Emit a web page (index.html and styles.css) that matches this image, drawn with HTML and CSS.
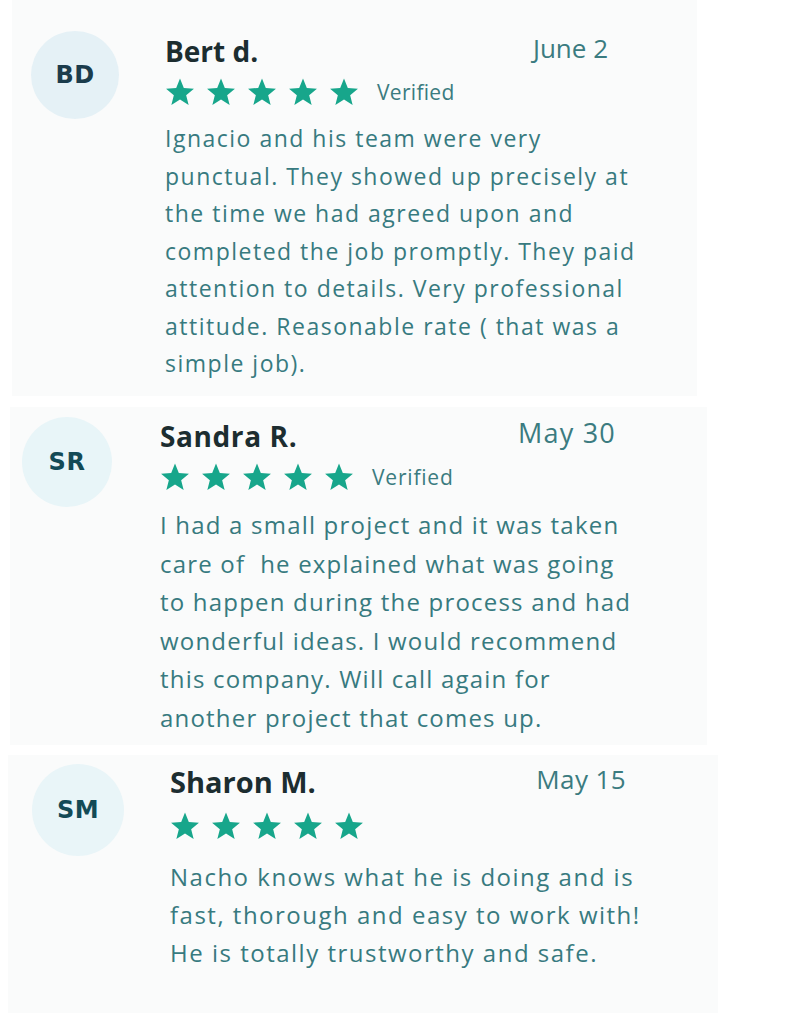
FILE: index.html
```html
<!DOCTYPE html>
<html lang="en">
<head>
<meta charset="utf-8">
<title>Reviews</title>
<link rel="stylesheet" href="styles.css">
</head>
<body>
<svg width="0" height="0" class="defs">
  <defs>
    <symbol id="star" viewBox="0 0 24 24">
      <path d="M12 1.2l3.05 7.55 8.1.55-6.22 5.2 1.98 7.9L12 18.05 5.09 22.4l1.98-7.9L.85 9.3l8.1-.55z"/>
    </symbol>
  </defs>
</svg>
<main class="reviews">
  <section class="card card-1">
    <div class="avatar">BD</div>
    <div class="content">
      <div class="head">
        <span class="name">Bert d.</span>
        <span class="date">June 2</span>
      </div>
      <div class="rating">
        <svg class="star"><use href="#star"/></svg>
        <svg class="star"><use href="#star"/></svg>
        <svg class="star"><use href="#star"/></svg>
        <svg class="star"><use href="#star"/></svg>
        <svg class="star"><use href="#star"/></svg>
        <span class="verified">Verified</span>
      </div>
      <p class="text">Ignacio and his team were very<br>punctual. They showed up precisely at<br>the time we had agreed upon and<br>completed the job promptly. They paid<br>attention to details. Very professional<br>attitude. Reasonable rate ( that was a<br>simple job).</p>
    </div>
  </section>
  <section class="card card-2">
    <div class="avatar">SR</div>
    <div class="content">
      <div class="head">
        <span class="name">Sandra R.</span>
        <span class="date">May 30</span>
      </div>
      <div class="rating">
        <svg class="star"><use href="#star"/></svg>
        <svg class="star"><use href="#star"/></svg>
        <svg class="star"><use href="#star"/></svg>
        <svg class="star"><use href="#star"/></svg>
        <svg class="star"><use href="#star"/></svg>
        <span class="verified">Verified</span>
      </div>
      <p class="text">I had a small project and it was taken<br>care of&nbsp; he explained what was going<br>to happen during the process and had<br>wonderful ideas. I would recommend<br>this company. Will call again for<br>another project that comes up.</p>
    </div>
  </section>
  <section class="card card-3">
    <div class="avatar">SM</div>
    <div class="content">
      <div class="head">
        <span class="name">Sharon M.</span>
        <span class="date">May 15</span>
      </div>
      <div class="rating">
        <svg class="star"><use href="#star"/></svg>
        <svg class="star"><use href="#star"/></svg>
        <svg class="star"><use href="#star"/></svg>
        <svg class="star"><use href="#star"/></svg>
        <svg class="star"><use href="#star"/></svg>
      </div>
      <p class="text">Nacho knows what he is doing and is<br>fast, thorough and easy to work with!<br>He is totally trustworthy and safe.</p>
    </div>
  </section>
</main>
</body>
</html>
```

FILE: styles.css
```css
* { box-sizing: border-box; }
html, body { margin: 0; padding: 0; background: #ffffff; }
body { font-family: "Open Sans", "Liberation Sans", sans-serif; width: 791px; height: 1024px; overflow: hidden; }
.defs { position: absolute; width: 0; height: 0; }

.reviews { display: flex; flex-direction: column; }

.card {
  display: flex;
  align-items: flex-start;
  background: #fafbfb;
}
.avatar {
  flex: none;
  border-radius: 50%;
  display: flex;
  align-items: center;
  justify-content: center;
  font-family: "DejaVu Sans", "Open Sans", sans-serif;
  font-weight: 700;
  font-size: 24px;
  letter-spacing: 0.5px;
  color: #1b3c4c;
  background: #e5f1f6;
}
.content { display: flex; flex-direction: column; }
.head { display: flex; justify-content: space-between; align-items: flex-start; }
.name {
  font-weight: 700;
  font-size: 28px;
  line-height: 30px;
  color: #1c2d30;
}
.date {
  font-size: 26px;
  line-height: 24px;
  color: #3b7b80;
}
.rating { display: flex; align-items: center; gap: 11px; }
.star { width: 30px; height: 30px; fill: #17a68b; }
.verified {
  font-size: 21px;
  color: #3b7b80;
  margin-left: 7px;
  line-height: 30px;
  letter-spacing: 0.3px;
}
.text {
  margin: 0;
  font-size: 23px;
  color: #377a7f;
  white-space: nowrap;
  letter-spacing: 1.5px;
}

/* card 1 */
.card-1 { margin-left: 12px; width: 685px; height: 396px; padding: 31px 0 0 19px; gap: 46px; }
.card-1 .avatar { width: 88px; height: 88px; }
.card-1 .content { padding-top: 5px; }
.card-1 .head { width: 443px; }
.card-1 .rating { margin-top: 11px; }
.card-1 .text { margin-top: 13px; line-height: 37.5px; }

/* card 2 */
.card-2 { margin-top: 11px; margin-left: 10px; width: 697px; height: 338px; padding: 10px 0 0 12px; gap: 48px; }
.card-2 .avatar { width: 90px; height: 90px; background: #e8f5f8; color: #134a56; }
.card-2 .content { padding-top: 4px; }
.card-2 .head { width: 456px; }
.card-2 .name { letter-spacing: 0.6px; }
.card-2 .date { font-size: 27px; letter-spacing: 1.2px; }
.card-2 .verified { font-size: 21px; letter-spacing: 0.8px; }
.card-2 .rating { margin-top: 11px; }
.card-2 .text { margin-top: 14px; line-height: 38.5px; font-size: 24px; letter-spacing: 1.2px; }

/* card 3 */
.card-3 { margin-top: 10px; margin-left: 8px; width: 710px; height: 258px; padding: 9px 0 0 24px; gap: 46px; }
.card-3 .avatar { width: 92px; height: 92px; background: #e9f5f8; color: #134a56; }
.card-3 .content { padding-top: 3px; }
.card-3 .head { width: 456px; }
.card-3 .name { font-size: 29px; }
.card-3 .date { font-size: 26px; letter-spacing: 0.4px; }
.card-3 .rating { margin-top: 14px; }
.card-3 .text { margin-top: 17px; line-height: 38px; font-size: 24px; letter-spacing: 1.5px; }
```
